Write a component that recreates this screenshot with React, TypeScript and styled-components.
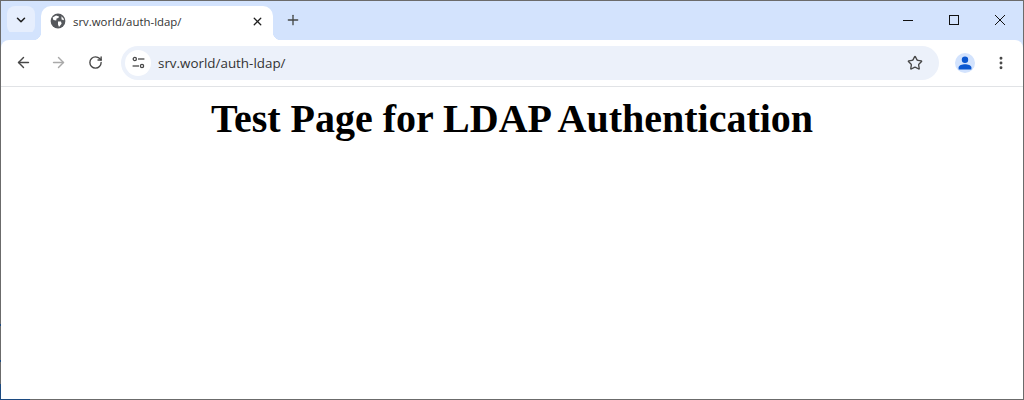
import styled, { createGlobalStyle } from "styled-components";
import { ArrowLeft, ArrowRight, ChevronDown, EllipsisVertical, Plus, RotateCw, Star, X } from "lucide-react";

const URL_TEXT = "srv.world/auth-ldap/";

const GlobalStyle = createGlobalStyle`
  html, body {
    margin: 0;
    padding: 0;
    background: #fff;
  }
`;

const App = () => {
  return (
    <Window>
      <GlobalStyle />
      <TabStrip>
        <TabSearch>
          <ChevronDown size={14} strokeWidth={2.6} color="#1f1f1f" />
        </TabSearch>
        <Tab>
          <svg width="16" height="16" viewBox="0 0 16 16">
            <circle cx="8" cy="8" r="7.4" fill="#55585c" />
            <path d="M2.6 4.4 L6 2.6 L9 3.4 L8.4 5 L6.6 5.4 L6.2 7.4 L3.4 7 Z M8 8.4 L11 8.6 L11.6 10.8 L9 14 L8 11.5 Z M11.4 3.2 L13.6 5.4 L14 7.2 L11.6 6.4 Z" fill="#fff" />
          </svg>
          <TabTitle>{URL_TEXT}</TabTitle>
          <X size={13} strokeWidth={2.4} color="#1f1f1f" />
        </Tab>
        <NewTab>
          <Plus size={16} strokeWidth={2} color="#444746" />
        </NewTab>
        <WindowControls>
          <WindowButton>
            <svg width="12" height="12" viewBox="0 0 12 12" fill="none" stroke="#111" shapeRendering="crispEdges">
              <path d="M1 6.5H11" />
            </svg>
          </WindowButton>
          <WindowButton>
            <svg width="12" height="12" viewBox="0 0 12 12" fill="none" stroke="#111" shapeRendering="crispEdges">
              <rect x="1.5" y="1.5" width="9" height="9" />
            </svg>
          </WindowButton>
          <WindowButton>
            <svg width="12" height="12" viewBox="0 0 12 12" fill="none" stroke="#111">
              <path d="M1 1L11 11M11 1L1 11" />
            </svg>
          </WindowButton>
        </WindowControls>
      </TabStrip>
      <Toolbar>
        <NavButton>
          <ArrowLeft size={17} strokeWidth={2} color="#474747" />
        </NavButton>
        <NavButton>
          <ArrowRight size={17} strokeWidth={2} color="#a9a9a9" />
        </NavButton>
        <ReloadButton>
          <RotateCw size={15} strokeWidth={2.2} color="#474747" />
        </ReloadButton>
        <Omnibox>
          <SiteInfo>
            <svg width="13" height="13" viewBox="0 0 13 13" fill="none" stroke="#474747" strokeWidth="1.3">
              <circle cx="2.8" cy="3" r="1.6" />
              <path d="M6 3H12.4" />
              <circle cx="10" cy="10" r="1.6" />
              <path d="M0.6 10H7" />
            </svg>
          </SiteInfo>
          <UrlText>{URL_TEXT}</UrlText>
          <Star size={16} strokeWidth={2} color="#474747" />
        </Omnibox>
        <Profile>
          <svg width="14" height="14" viewBox="0 0 14 14" fill="#0b57d0">
            <circle cx="7" cy="3.7" r="3.2" />
            <path d="M0.6 13.5V11.6C0.6 9.4 4.2 8.2 7 8.2S13.4 9.4 13.4 11.6V13.5Z" />
          </svg>
        </Profile>
        <MenuButton>
          <EllipsisVertical size={16} strokeWidth={2.4} color="#474747" />
        </MenuButton>
      </Toolbar>
      <Page>
        <Heading>Test Page for LDAP Authentication</Heading>
      </Page>
      <LeftEdgeMark $top={324} $height={2} />
      <LeftEdgeMark $top={360} $height={2} />
      <LeftEdgeMark $top={384} $height={16} />
      <BottomEdgeMark />
    </Window>
  );
};

export default App;

const Window = styled.div`
  position: relative;
  box-sizing: border-box;
  display: flex;
  flex-direction: column;
  width: 1024px;
  height: 400px;
  overflow: hidden;
  border: 1px solid #6b6b6b;
  background: #fff;
`;

// the desktop wallpaper showing through the frame in the lower left
const LeftEdgeMark = styled.i<{ $top: number; $height: number }>`
  position: fixed;
  left: 0;
  top: ${(p) => p.$top}px;
  width: 1px;
  height: ${(p) => p.$height}px;
  background: #1c4a80;
`;

const BottomEdgeMark = styled.i`
  position: fixed;
  left: 0;
  top: 399px;
  width: 30px;
  height: 1px;
  background: #1c4a80;
`;

const TabStrip = styled.div`
  display: flex;
  flex: none;
  align-items: flex-end;
  height: 39px;
  padding-left: 6px;
  background: #d3e3fd;
`;

const TabSearch = styled.div`
  display: flex;
  align-items: center;
  justify-content: center;
  align-self: flex-start;
  width: 28px;
  height: 28px;
  margin-top: 5px;
  border-radius: 8px;
  background: #e6eefd;
`;

const Tab = styled.div`
  position: relative;
  display: flex;
  align-items: center;
  box-sizing: border-box;
  width: 232px;
  height: 34px;
  margin-left: 6px;
  padding: 0 9px 4px 9px;
  border-radius: 10px 10px 0 0;
  background: #fff;

  &::before,
  &::after {
    content: "";
    position: absolute;
    bottom: 0;
    width: 8px;
    height: 8px;
  }

  &::before {
    left: -8px;
    background: radial-gradient(circle at 0 0, #d3e3fd 8px, #fff 8.5px);
  }

  &::after {
    right: -8px;
    background: radial-gradient(circle at 100% 0, #d3e3fd 8px, #fff 8.5px);
  }
`;

const TabTitle = styled.span`
  flex: 1;
  margin-left: 7px;
  font-family: "Open Sans", "Noto Sans", sans-serif;
  font-size: 11.4px;
  color: #333;
`;

const NewTab = styled.div`
  display: flex;
  align-items: center;
  justify-content: center;
  align-self: flex-start;
  width: 28px;
  height: 28px;
  margin-top: 5px;
  margin-left: 6px;
`;

const WindowControls = styled.div`
  display: flex;
  align-self: flex-start;
  height: 39px;
  margin-left: auto;
`;

const WindowButton = styled.div`
  display: flex;
  align-items: center;
  justify-content: center;
  box-sizing: border-box;
  width: 46px;
  height: 39px;
  padding-bottom: 1px;
`;

const Toolbar = styled.div`
  display: flex;
  flex: none;
  align-items: center;
  box-sizing: border-box;
  height: 47px;
  padding: 0 6px 1px 8px;
  border-bottom: 1px solid #e1e3e6;
  border-radius: 8px 8px 0 0;
  background: #fff;
  box-shadow: 0 -8px 0 #d3e3fd;
`;

const NavButton = styled.div`
  display: flex;
  align-items: center;
  justify-content: center;
  width: 28px;
  height: 28px;
  margin-right: 7px;
`;

const ReloadButton = styled(NavButton)`
  margin-left: 2px;
  margin-right: 12px;
`;

const Omnibox = styled.div`
  display: flex;
  flex: none;
  align-items: center;
  box-sizing: border-box;
  width: 818px;
  height: 34px;
  padding: 0 16px 0 4px;
  border-radius: 17px;
  background: #ecf1fa;
`;

const SiteInfo = styled.div`
  display: flex;
  align-items: center;
  justify-content: center;
  width: 26px;
  height: 26px;
  border-radius: 50%;
  background: #fff;
`;

const UrlText = styled.span`
  flex: 1;
  margin-left: 7px;
  font-family: "Open Sans", "Noto Sans", sans-serif;
  font-size: 13.4px;
  color: #333;
`;

const Profile = styled.div`
  display: flex;
  align-items: center;
  justify-content: center;
  flex: none;
  overflow: hidden;
  width: 20px;
  height: 20px;
  margin-left: 16px;
  border-radius: 50%;
  background: #d3e3fd;
`;

const MenuButton = styled.div`
  display: flex;
  align-items: center;
  justify-content: center;
  width: 16px;
  height: 20px;
  margin-left: 18px;
`;

const Page = styled.main`
  flex: 1;
  background: #fff;
`;

const Heading = styled.h1`
  margin: 9px 0 0;
  font-family: "Liberation Serif", "Times New Roman", serif;
  font-size: 40px;
  font-weight: 700;
  line-height: 46px;
  text-align: center;
  color: #000;
`;
